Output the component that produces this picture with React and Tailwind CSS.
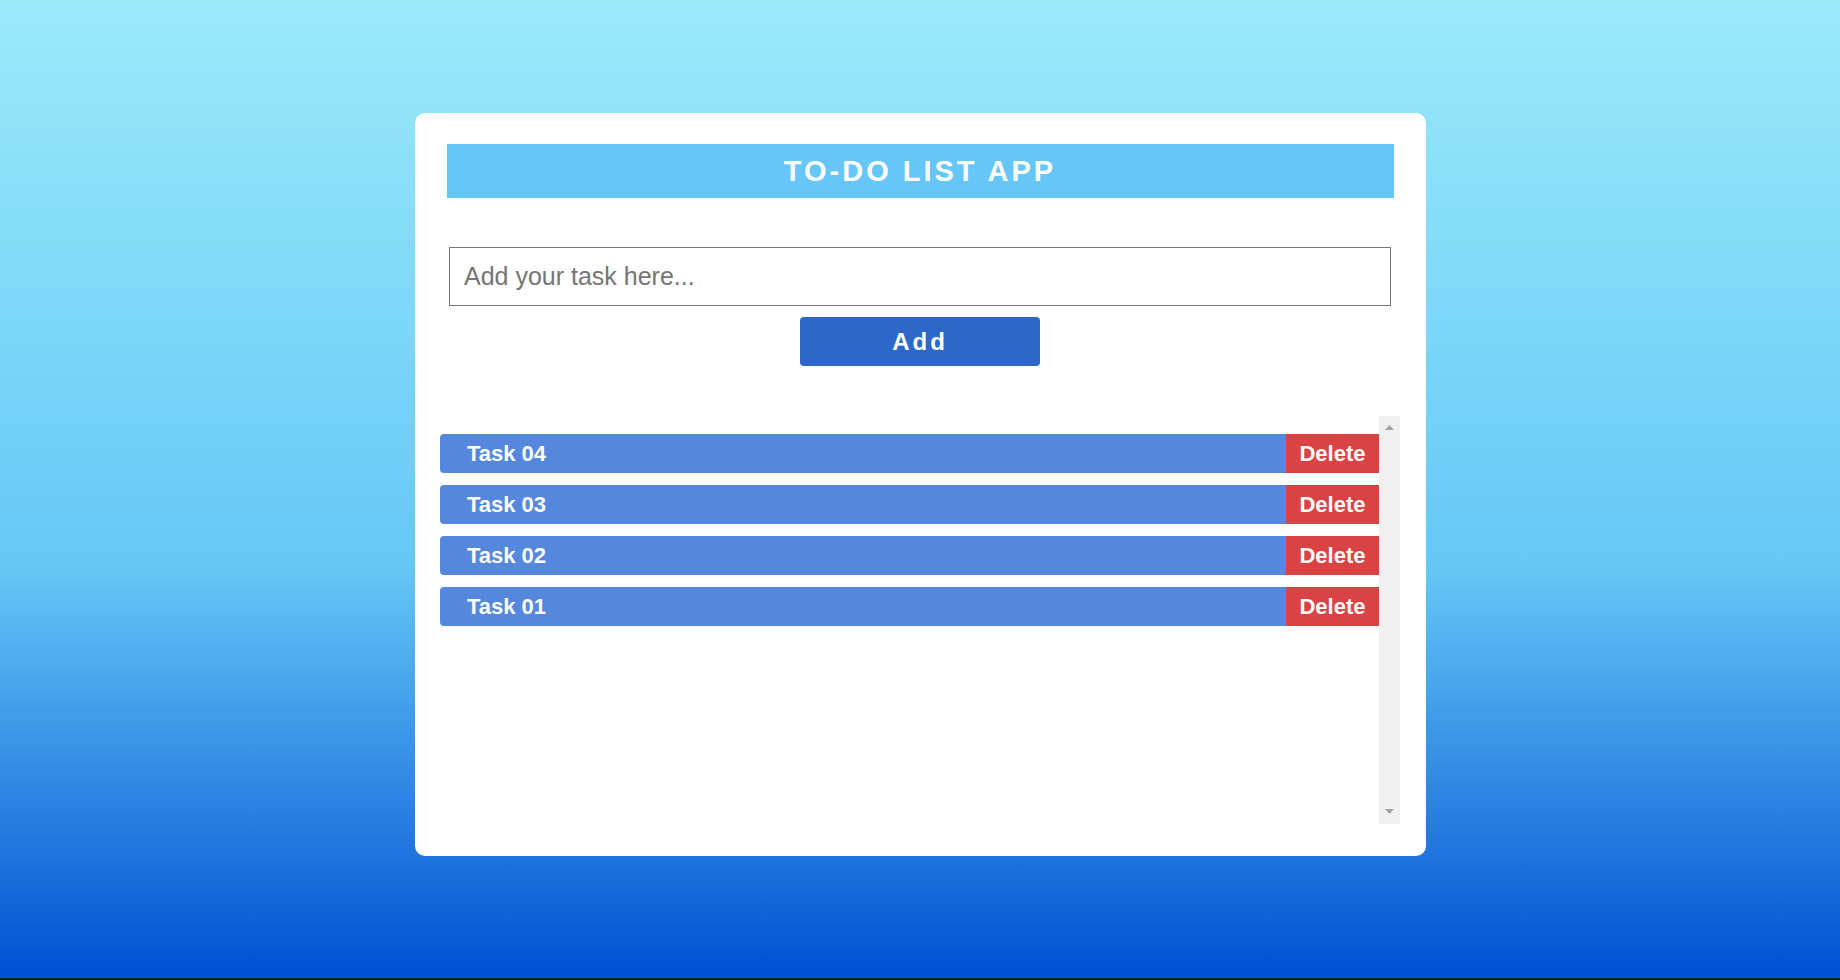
import React, { useState } from 'react';

const initialTasks = ['Task 04', 'Task 03', 'Task 02', 'Task 01'];

const ScrollArrow = ({ down }) => (
  <svg width="9" height="5" viewBox="0 0 9 5" className="block">
    {down ? <polygon points="0,0 9,0 4.5,5" fill="#a3a3a3" /> : <polygon points="0,5 9,5 4.5,0" fill="#a3a3a3" />}
  </svg>
);

const App = () => {
  const [tasks, setTasks] = useState(initialTasks);
  const [text, setText] = useState('');

  const addTask = () => {
    if (!text.trim()) return;
    setTasks([text.trim(), ...tasks]);
    setText('');
  };

  return (
    <div className="h-[980px] flex flex-col bg-[#202020] font-['Liberation_Sans',Arial,sans-serif]">
      <div className="h-[978px] pt-[113px] bg-[linear-gradient(180deg,#9aebfa_0%,#66c7f6_58%,#0050d2_100%)]">
        {/* Card */}
        <div className="mx-auto w-[1011px] h-[743px] bg-white rounded-[10px] pt-[31px] flex flex-col">
          <div className="mx-[32px] h-[54px] bg-[#65c6f7] flex items-center justify-center">
            <h1 className="text-white font-bold text-[29px] tracking-[3px] leading-none">TO-DO LIST APP</h1>
          </div>

          <input
            value={text}
            onChange={e => setText(e.target.value)}
            placeholder="Add your task here..."
            className="mt-[49px] mx-auto w-[942px] h-[59px] border border-[#767676] px-[14px] text-[25px] text-[#333] placeholder:text-[#757575] outline-none"
          />
          <button
            onClick={addTask}
            className="mt-[11px] mx-auto w-[240px] h-[49px] bg-[#2d68c9] rounded-[4px] text-white font-bold text-[24px] tracking-[3px] leading-none"
          >
            Add
          </button>

          {/* List */}
          <div className="mt-[50px] mx-auto w-[960px] h-[408px] flex">
            <div className="flex-1 pt-[18px] flex flex-col gap-[12px]">
              {tasks.map((t, i) => (
                <div key={i} className="h-[39px] flex rounded-l-[4px] bg-[#5588dc] overflow-hidden">
                  <span className="flex-1 pl-[27px] flex items-center text-white font-bold text-[22px]">{t}</span>
                  <button
                    onClick={() => setTasks(tasks.filter((_, j) => j !== i))}
                    className="w-[93px] bg-[#da4343] text-white font-bold text-[22px]"
                  >
                    Delete
                  </button>
                </div>
              ))}
            </div>
            <div className="w-[21px] bg-[#f0f0f0] flex flex-col items-center justify-between pt-[9px] pb-[10px]">
              <ScrollArrow />
              <ScrollArrow down />
            </div>
          </div>
        </div>
      </div>
    </div>
  );
};

export default App;
